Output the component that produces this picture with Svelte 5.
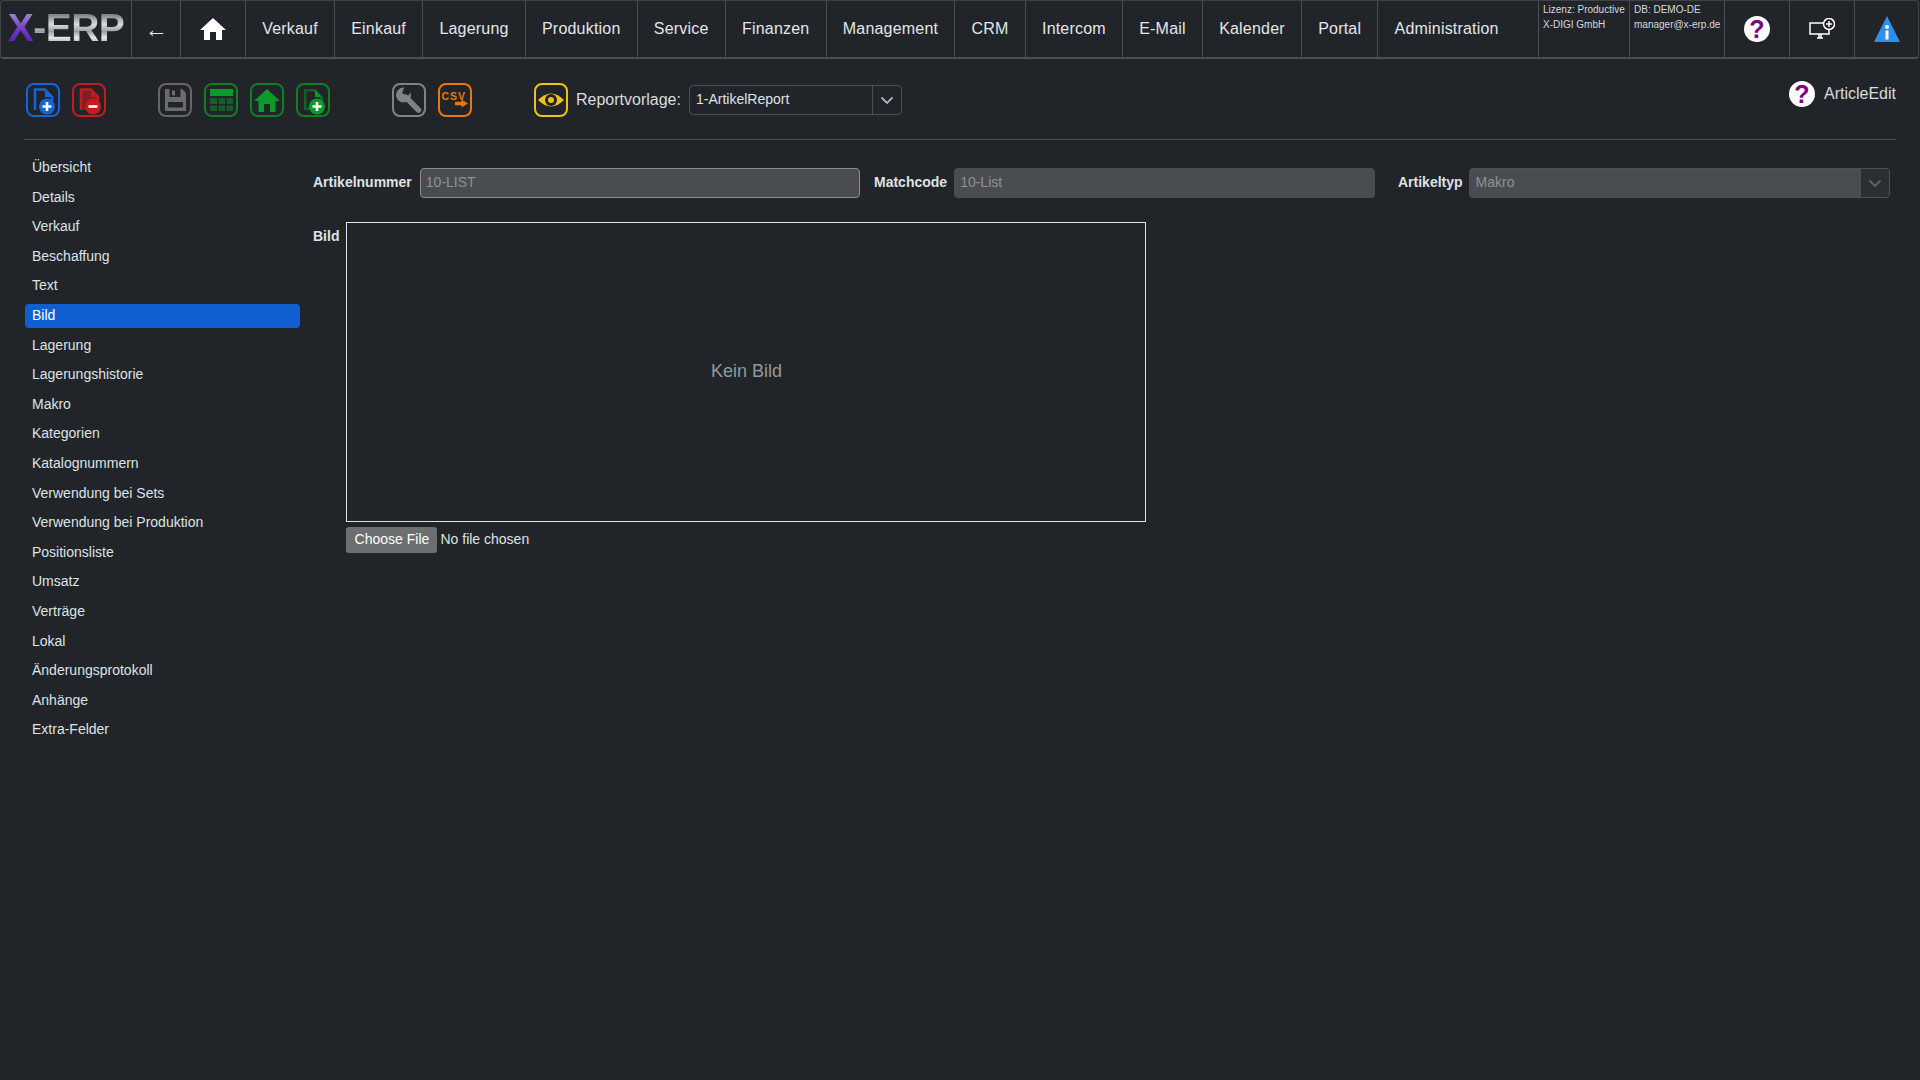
<script>
  const menu = ['Verkauf', 'Einkauf', 'Lagerung', 'Produktion', 'Service', 'Finanzen', 'Management', 'CRM', 'Intercom', 'E-Mail', 'Kalender', 'Portal', 'Administration'];
  const sections = ['Übersicht', 'Details', 'Verkauf', 'Beschaffung', 'Text', 'Bild', 'Lagerung', 'Lagerungshistorie', 'Makro', 'Kategorien', 'Katalognummern', 'Verwendung bei Sets', 'Verwendung bei Produktion', 'Positionsliste', 'Umsatz', 'Verträge', 'Lokal', 'Änderungsprotokoll', 'Anhänge', 'Extra-Felder'];
  let active = $state('Bild');
</script>

{#snippet chevron()}
  <svg width="14" height="9" viewBox="0 0 14 9"><polyline points="1.5,1.5 7,7 12.5,1.5" fill="none" stroke="currentColor" stroke-width="1.8" /></svg>
{/snippet}

{#snippet help(size)}
  <svg width={size} height={size} viewBox="0 0 26 26">
    <circle cx="13" cy="13" r="13" fill="#fff" />
    <text x="13" y="21.5" text-anchor="middle" class="qmark">?</text>
  </svg>
{/snippet}

<header class="nav">
  <div class="cell logo"><span class="x">X</span><span class="erp">-ERP</span></div>
  <div class="cell back">←</div>
  <div class="cell home">
    <svg width="26" height="24" viewBox="0 0 26 24"><path d="M13 1 L26 13 H22 V23 H16 V15 H10 V23 H4 V13 H0 Z" fill="#fff" /></svg>
  </div>
  {#each menu as item}
    <div class="cell item">{item}</div>
  {/each}
  <div class="cell info lic"><span>Lizenz: Productive</span><span>X-DIGI GmbH</span></div>
  <div class="cell info db"><span>DB: DEMO-DE</span><span>manager@x-erp.de</span></div>
  <div class="cell tool">{@render help(26)}</div>
  <div class="cell tool">
    <svg width="26" height="22" viewBox="0 0 26 22" fill="none" stroke="#fff" stroke-width="1.5">
      <path d="M16 5 H1 V16 H20 V12" />
      <path d="M8 20 H14 M10 16 V20 M12 16 V20" />
      <circle cx="20" cy="6" r="5.5" fill="#212529" />
      <path d="M17 6 H23 M20 3 V9" />
    </svg>
  </div>
  <div class="cell tool last">
    <svg width="26" height="26" viewBox="0 0 26 26">
      <path d="M13 0 L26 26 H0 Z" fill="#2f8fef" />
      <circle cx="13" cy="11" r="2" fill="#fff" />
      <rect x="11.5" y="14.5" width="3" height="9" fill="#fff" />
    </svg>
  </div>
</header>

<div class="toolbar">
  <div class="group">
    <svg class="ic blue" viewBox="0 0 34 34">
      <rect x="1" y="1" width="32" height="32" rx="7" class="box" />
      <path d="M9 27 V6.5 H19 L26 14 V18" class="line" />
      <path d="M19 6.5 L26 14 H19 Z" class="solid" />
      <circle cx="21" cy="23.5" r="8" class="solid" />
      <path d="M16.5 23.5 H25.5 M21 19 V28" class="mark" />
    </svg>
    <svg class="ic red" viewBox="0 0 34 34">
      <rect x="1" y="1" width="32" height="32" rx="7" class="box" />
      <path d="M8 27 V6 H19 L27 14 V27 Z" fill="#7c2022" />
      <path d="M9 27 V6.5 H19 L26 14 V18" class="line" />
      <path d="M19 6.5 L26 14 H19 Z" class="solid" />
      <circle cx="21" cy="23.5" r="8" class="solid" />
      <path d="M16.5 23.5 H25.5" class="mark" />
    </svg>
  </div>
  <div class="group">
    <svg class="ic gray" viewBox="0 0 34 34">
      <rect x="1" y="1" width="32" height="32" rx="7" class="box" />
      <path d="M7 6 H24 L28 10 V28 H7 Z" class="solid" />
      <rect x="11.5" y="6" width="11" height="8" fill="#212529" />
      <rect x="14" y="7.5" width="3" height="5" class="solid" />
      <rect x="10" y="19" width="15" height="5.5" fill="#212529" />
    </svg>
    <svg class="ic green" viewBox="0 0 34 34">
      <rect x="1" y="1" width="32" height="32" rx="7" class="box" />
      <rect x="6" y="6" width="23" height="7" class="solid" />
      <g fill="#135f27">
        <rect x="6" y="15" width="7" height="6" /><rect x="14.5" y="15" width="6.5" height="6" /><rect x="22.5" y="15" width="6.5" height="6" />
        <rect x="6" y="22.5" width="7" height="5.5" /><rect x="14.5" y="22.5" width="6.5" height="5.5" /><rect x="22.5" y="22.5" width="6.5" height="5.5" />
      </g>
    </svg>
    <svg class="ic green" viewBox="0 0 34 34">
      <path d="M17 6 L30 18 H25.5 V29 H20 V21 H14 V29 H8.5 V18 H4 Z" class="solid" />
      <rect x="1" y="1" width="32" height="32" rx="7" class="box" />
    </svg>
    <svg class="ic green" viewBox="0 0 34 34">
      <rect x="1" y="1" width="32" height="32" rx="7" class="box" />
      <path d="M8 27 V6 H19 L27 14 V27 Z" fill="#135f27" />
      <path d="M10.5 25 V8.5 H18 L24 15 V18" fill="#212529" />
      <path d="M19 6.5 L26 14 H19 Z" class="solid" />
      <circle cx="21" cy="23.5" r="8" class="solid" />
      <path d="M16.5 23.5 H25.5 M21 19 V28" class="mark" />
    </svg>
  </div>
  <div class="group tools">
    <svg class="ic grayl" viewBox="0 0 34 34">
      <rect x="1" y="1" width="32" height="32" rx="7" class="box" />
      <circle cx="11.5" cy="12" r="7.5" class="solid" />
      <path d="M10 10 L13 3 L21 6 L16 13 Z" fill="#212529" />
      <path d="M14 14.5 L26.5 27" stroke="#808386" stroke-width="5.5" stroke-linecap="round" />
    </svg>
    <svg class="ic orange" viewBox="0 0 34 34">
      <rect x="1" y="1" width="32" height="32" rx="7" class="box" />
      <text x="3.5" y="17" class="csv">CSV</text>
      <path d="M17 18.8 H23.5 V16.5 L30 20.5 L23.5 24.5 V22.2 H17 Z" class="solid" />
    </svg>
  </div>
  <div class="report">
    <svg class="ic yellow" viewBox="0 0 34 34">
      <rect x="1" y="1" width="32" height="32" rx="7" class="box" />
      <path d="M4 17 Q17 4 30 17 Q17 30 4 17 Z" class="solid" />
      <circle cx="17" cy="17" r="6" fill="#212529" />
      <circle cx="17" cy="17" r="3" class="solid" />
    </svg>
    <span class="rlabel">Reportvorlage:</span>
    <div class="select rselect">
      <span class="value">1-ArtikelReport</span>
      <span class="arrow">{@render chevron()}</span>
    </div>
  </div>
  <div class="context">
    {@render help(26)}
    <span>ArticleEdit</span>
  </div>
</div>

<hr />

<main class="body">
  <nav class="side">
    {#each sections as s}
      <button class="link" class:active={active === s} onclick={() => (active = s)}>{s}</button>
    {/each}
  </nav>

  <section class="content">
    <div class="fields">
      <div class="field f1">
        <label for="num">Artikelnummer</label>
        <input id="num" class="accent" disabled value="10-LIST" />
      </div>
      <div class="field f2">
        <label for="mc">Matchcode</label>
        <input id="mc" disabled value="10-List" />
      </div>
      <div class="field f3">
        <span class="lab">Artikeltyp</span>
        <div class="select off">
          <span class="value">Makro</span>
          <span class="arrow">{@render chevron()}</span>
        </div>
      </div>
    </div>

    <div class="pic">
      <span class="lab piclab">Bild</span>
      <div class="piccol">
        <div class="frame">Kein Bild</div>
        <input class="file" type="file" />
      </div>
    </div>
  </section>
</main>

<style>
  :global(body) {
    background: #212529;
    color: #dee2e6;
    font-family: "Liberation Sans", Arial, sans-serif;
    min-height: 100vh;
  }

  .nav {
    display: flex;
    height: 59px;
    box-sizing: border-box;
    margin-right: 1px;
    border: 1px solid #3f4347;
    border-bottom: 2px solid #4c5054;
    border-radius: 4px;
  }
  .cell {
    display: flex;
    align-items: center;
    justify-content: center;
    border-right: 1px solid #4c5054;
    box-sizing: border-box;
    flex: none;
  }
  .logo {
    width: 131px;
    font-size: 39px;
    font-weight: 700;
    letter-spacing: -0.5px;
    padding-bottom: 2px;
  }
  .x {
    background: linear-gradient(180deg, #9a7fd2 20%, #6f36c4 55%, #5a22b0 85%);
    -webkit-background-clip: text;
    background-clip: text;
    color: transparent;
  }
  .erp {
    background: linear-gradient(180deg, #7f8488 20%, #d9dcdf 42%, #9a9fa3 58%, #e6e8ea 72%, #a8adb1 85%);
    -webkit-background-clip: text;
    background-clip: text;
    color: transparent;
  }
  .back { width: 49px; font-size: 23px; color: #e4e6e8; }
  .home { width: 65px; }
  .item { padding: 0 16.2px; font-size: 16px; letter-spacing: 0.2px; color: #e3e6e9; }
  .item:nth-last-child(6) { flex: 1; justify-content: flex-start; }
  .info {
    flex-direction: column;
    align-items: flex-start;
    justify-content: flex-start;
    padding: 1px 0 0 4px;
    font-size: 10px;
    line-height: 15px;
    color: #d6d9dc;
    white-space: nowrap;
  }
  .lic { width: 91px; }
  .db { width: 95px; }
  .tool { width: 65px; }
  .tool.last { width: 63px; border-right: 0; }
  .qmark {
    font-family: "Liberation Sans", Arial, sans-serif;
    font-size: 25px;
    font-weight: 700;
    fill: #800080;
  }

  .toolbar {
    display: flex;
    align-items: center;
    padding: 24px 24px 0 26px;
    height: 34px;
  }
  .group { display: flex; gap: 12px; margin-right: 52px; }
  .tools { margin-left: 10px; margin-right: 62px; }
  .ic { width: 34px; height: 34px; display: block; flex: none; }
  .box { fill: none; stroke-width: 2; }
  .line { fill: none; stroke-width: 2.5; }
  .mark { fill: none; stroke: #fff; stroke-width: 2.6; }
  .blue .box, .blue .line { stroke: #1764d6; }
  .blue .solid { fill: #1764d6; }
  .red .box, .red .line { stroke: #c81a1e; }
  .red .solid { fill: #c81a1e; }
  .gray .box { stroke: #646668; }
  .gray .solid { fill: #6a6c6e; }
  .green .box { stroke: #0f7f22; }
  .green .solid { fill: #0c9a2c; }
  .grayl .box { stroke: #808386; }
  .grayl .solid { fill: #808386; }
  .orange .box { stroke: #e8770f; }
  .orange .solid { fill: #e8770f; }
  .yellow .box { stroke: #eec216; }
  .yellow .solid { fill: #eec216; }
  .csv {
    font-family: "Liberation Sans", Arial, sans-serif;
    font-size: 10.5px;
    font-weight: 700;
    letter-spacing: 1px;
    fill: #e8770f;
  }

  .report { display: flex; align-items: center; }
  .rlabel { margin: 0 8px 0 8px; font-size: 16px; color: #d9dcdf; }
  .select {
    display: flex;
    align-items: stretch;
    height: 30px;
    box-sizing: border-box;
    border: 1px solid #495057;
    border-radius: 4px;
    font-size: 14px;
    color: #dee2e6;
  }
  .rselect { width: 213px; }
  .value { flex: 1; padding-left: 6px; line-height: 26px; }
  .arrow {
    width: 28px;
    display: flex;
    align-items: center;
    justify-content: center;
    border-left: 1px solid #495057;
    color: #adb5bd;
  }
  .context {
    margin-left: auto;
    display: flex;
    align-items: center;
    gap: 9px;
    font-size: 16px;
    color: #d9dcdf;
    margin-top: -13px;
  }

  hr {
    margin: 22px 24px 0;
    border: 0;
    border-top: 1px solid #4c5054;
  }

  .body { display: flex; }
  .side {
    width: 275px;
    margin-left: 25px;
    padding-top: 16px;
    display: flex;
    flex-direction: column;
    gap: 5.6px;
    flex: none;
  }
  .link {
    all: unset;
    height: 24px;
    box-sizing: border-box;
    padding: 0 7px 2px;
    font-size: 14px;
    color: #dee2e6;
    border-radius: 4px;
    cursor: pointer;
  }
  .link.active { background: #0f5fd0; color: #fff; }

  .content { margin-left: 13px; padding-top: 28px; width: 1577px; }
  .fields { display: flex; }
  .field { display: flex; align-items: center; gap: 6px; }
  .f1 { width: 547px; gap: 8px; }
  .f2 { width: 501px; margin-left: 14px; gap: 7px; }
  .f3 { width: 492px; margin-left: 23px; }
  label, .lab {
    font-size: 14px;
    font-weight: 700;
    color: #dee2e6;
    white-space: nowrap;
  }
  .field label, .field .lab { padding-bottom: 2px; }
  input:not(.file) {
    flex: 1;
    min-width: 0;
    height: 30px;
    box-sizing: border-box;
    padding: 0 5px 2px;
    background: #4a4d50;
    border: 1px solid #4a4d50;
    border-radius: 4px;
    font: 14px "Liberation Sans", Arial, sans-serif;
    color: #8e9296;
    opacity: 1;
  }
  input.accent { border: 1.5px solid #8d8d80; }
  .off { flex: 1; background: #4a4d50; color: #8e9296; }
  .off .arrow { background: #2b2f33; color: #5f6468; border-radius: 0 3px 3px 0; }

  .pic { display: flex; gap: 7px; margin-top: 24px; }
  .piclab { line-height: 28px; }
  .piccol { display: flex; flex-direction: column; }
  .frame {
    width: 800px;
    height: 300px;
    box-sizing: border-box;
    border: 1px solid #dee2e6;
    padding-bottom: 2px;
    display: flex;
    align-items: center;
    justify-content: center;
    font-size: 18px;
    color: #94989c;
  }
  .file {
    margin-top: 5px;
    font: 14px "Liberation Sans", Arial, sans-serif;
    color: #dee2e6;
    width: 300px;
  }
  .file::file-selector-button {
    height: 26px;
    width: 91px;
    margin-right: 3px;
    padding-bottom: 3px;
    border: 0;
    border-radius: 3px;
    background: #6c6e70;
    color: #fff;
    font: 14px "Liberation Sans", Arial, sans-serif;
  }
</style>
